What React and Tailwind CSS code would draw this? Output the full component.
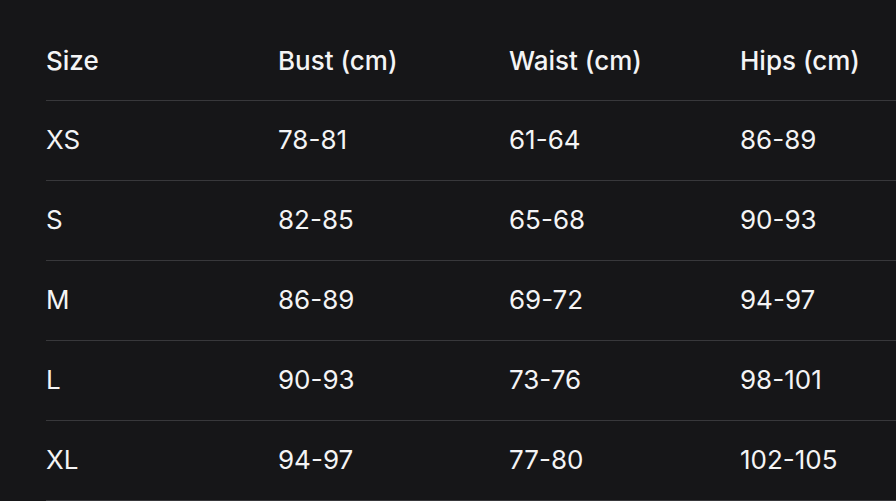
import React from 'react';

const rows = [
  ["XS", "78-81", "61-64", "86-89"],
  ["S", "82-85", "65-68", "90-93"],
  ["M", "86-89", "69-72", "94-97"],
  ["L", "90-93", "73-76", "98-101"],
  ["XL", "94-97", "77-80", "102-105"],
];

export default function App() {
  return (
    <div className="h-[501px] w-[896px] overflow-hidden bg-[#161618] pl-[46px] pt-5 font-['Inter',sans-serif] text-[#f4f4f5]">
      <table className="w-[925px] table-fixed border-collapse text-left text-[26px] leading-8">
        <thead>
          <tr className="border-b border-[#38383b]">
            <th className="w-[232px] pt-[25px] pb-[23px] font-medium">Size</th>
            <th className="w-[231px] pt-[25px] pb-[23px] font-medium">Bust (cm)</th>
            <th className="w-[231px] pt-[25px] pb-[23px] font-medium">Waist (cm)</th>
            <th className="w-[231px] pt-[25px] pb-[23px] font-medium">Hips (cm)</th>
          </tr>
        </thead>
        <tbody>
          {rows.map((r) => (
            <tr key={r[0]} className="border-b border-[#38383b]">
              {r.map((c, i) => (
                <td key={i} className="pt-[23px] pb-6 font-normal">{c}</td>
              ))}
            </tr>
          ))}
        </tbody>
      </table>
    </div>
  );
}
